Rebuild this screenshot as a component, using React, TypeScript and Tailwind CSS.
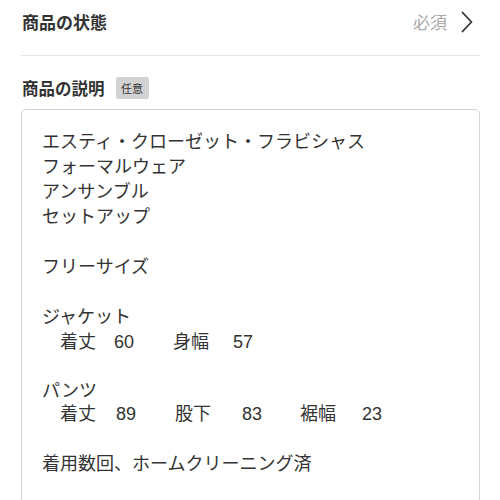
const FONT = "font-['Noto_Sans_CJK_JP','Noto_Sans',sans-serif]";
const BODY_FONT = "font-['Liberation_Sans','Noto_Sans_CJK_JP',sans-serif]";

function Chevron() {
  return (
    <svg width="12" height="22" viewBox="0 0 12 22" fill="none" className="text-[#333]">
      <path d="M1.5 1.5 L10.5 11 L1.5 20.5" stroke="currentColor" strokeWidth="1.8" strokeLinecap="round" strokeLinejoin="round" />
    </svg>
  );
}

type Cell = { text: string; w?: string };

function Row({ cells }: { cells: Cell[] }) {
  return (
    <div className="flex h-[25px] items-center pl-[18px]">
      {cells.map((c, i) => (
        <span key={i} className={`shrink-0 whitespace-nowrap ${c.w ?? ""}`}>
          {c.text}
        </span>
      ))}
    </div>
  );
}

function Line({ text }: { text: string }) {
  return <div className="h-[25px] leading-[25px] whitespace-pre">{text}</div>;
}

export default function App() {
  return (
    <div className={`h-[500px] w-[500px] overflow-hidden bg-white px-5 text-[#333] ${FONT}`}>
      {/* 商品の状態 */}
      <div className="flex h-[44px] items-center justify-between pl-[2px]">
        <span className="text-[17px] font-bold">商品の状態</span>
        <div className="flex items-center gap-[14px] pr-[7px]">
          <span className="text-[17px] text-[#aaa]">必須</span>
          <Chevron />
        </div>
      </div>
      <div className="mt-[11px] h-px bg-[#e6e6e6]" />

      {/* 商品の説明 */}
      <div className="mt-[21px] flex h-[22px] items-center gap-[11px] pl-[2px]">
        <span className="text-[16.5px] font-bold">商品の説明</span>
        <span className="flex h-[22px] w-[33px] items-center justify-center rounded-[2px] bg-[#d2d2d2] text-[11px] text-[#333]">
          任意
        </span>
      </div>

      <div className={`mt-[10px] ml-px h-[420px] rounded-[5px] border border-[#d4d4d4] px-5 pt-[20px] text-[18px] leading-[25px] ${BODY_FONT}`}>
        <Line text="エスティ・クローゼット・フラビシャス" />
        <Line text="フォーマルウェア" />
        <Line text="アンサンブル" />
        <Line text="セットアップ" />
        <Line text="" />
        <Line text="フリーサイズ" />
        <Line text="" />
        <Line text="ジャケット" />
        <Row
          cells={[
            { text: "着丈", w: "w-[54px]" },
            { text: "60", w: "w-[59px]" },
            { text: "身幅", w: "w-[60px]" },
            { text: "57" },
          ]}
        />
        <Line text="" />
        <div className="h-[22px] leading-[22px]">パンツ</div>
        <Row
          cells={[
            { text: "着丈", w: "w-[56px]" },
            { text: "89", w: "w-[59px]" },
            { text: "股下", w: "w-[67px]" },
            { text: "83", w: "w-[58px]" },
            { text: "裾幅", w: "w-[62px]" },
            { text: "23" },
          ]}
        />
        <Line text="" />
        <Line text="着用数回、ホームクリーニング済" />
      </div>
    </div>
  );
}
